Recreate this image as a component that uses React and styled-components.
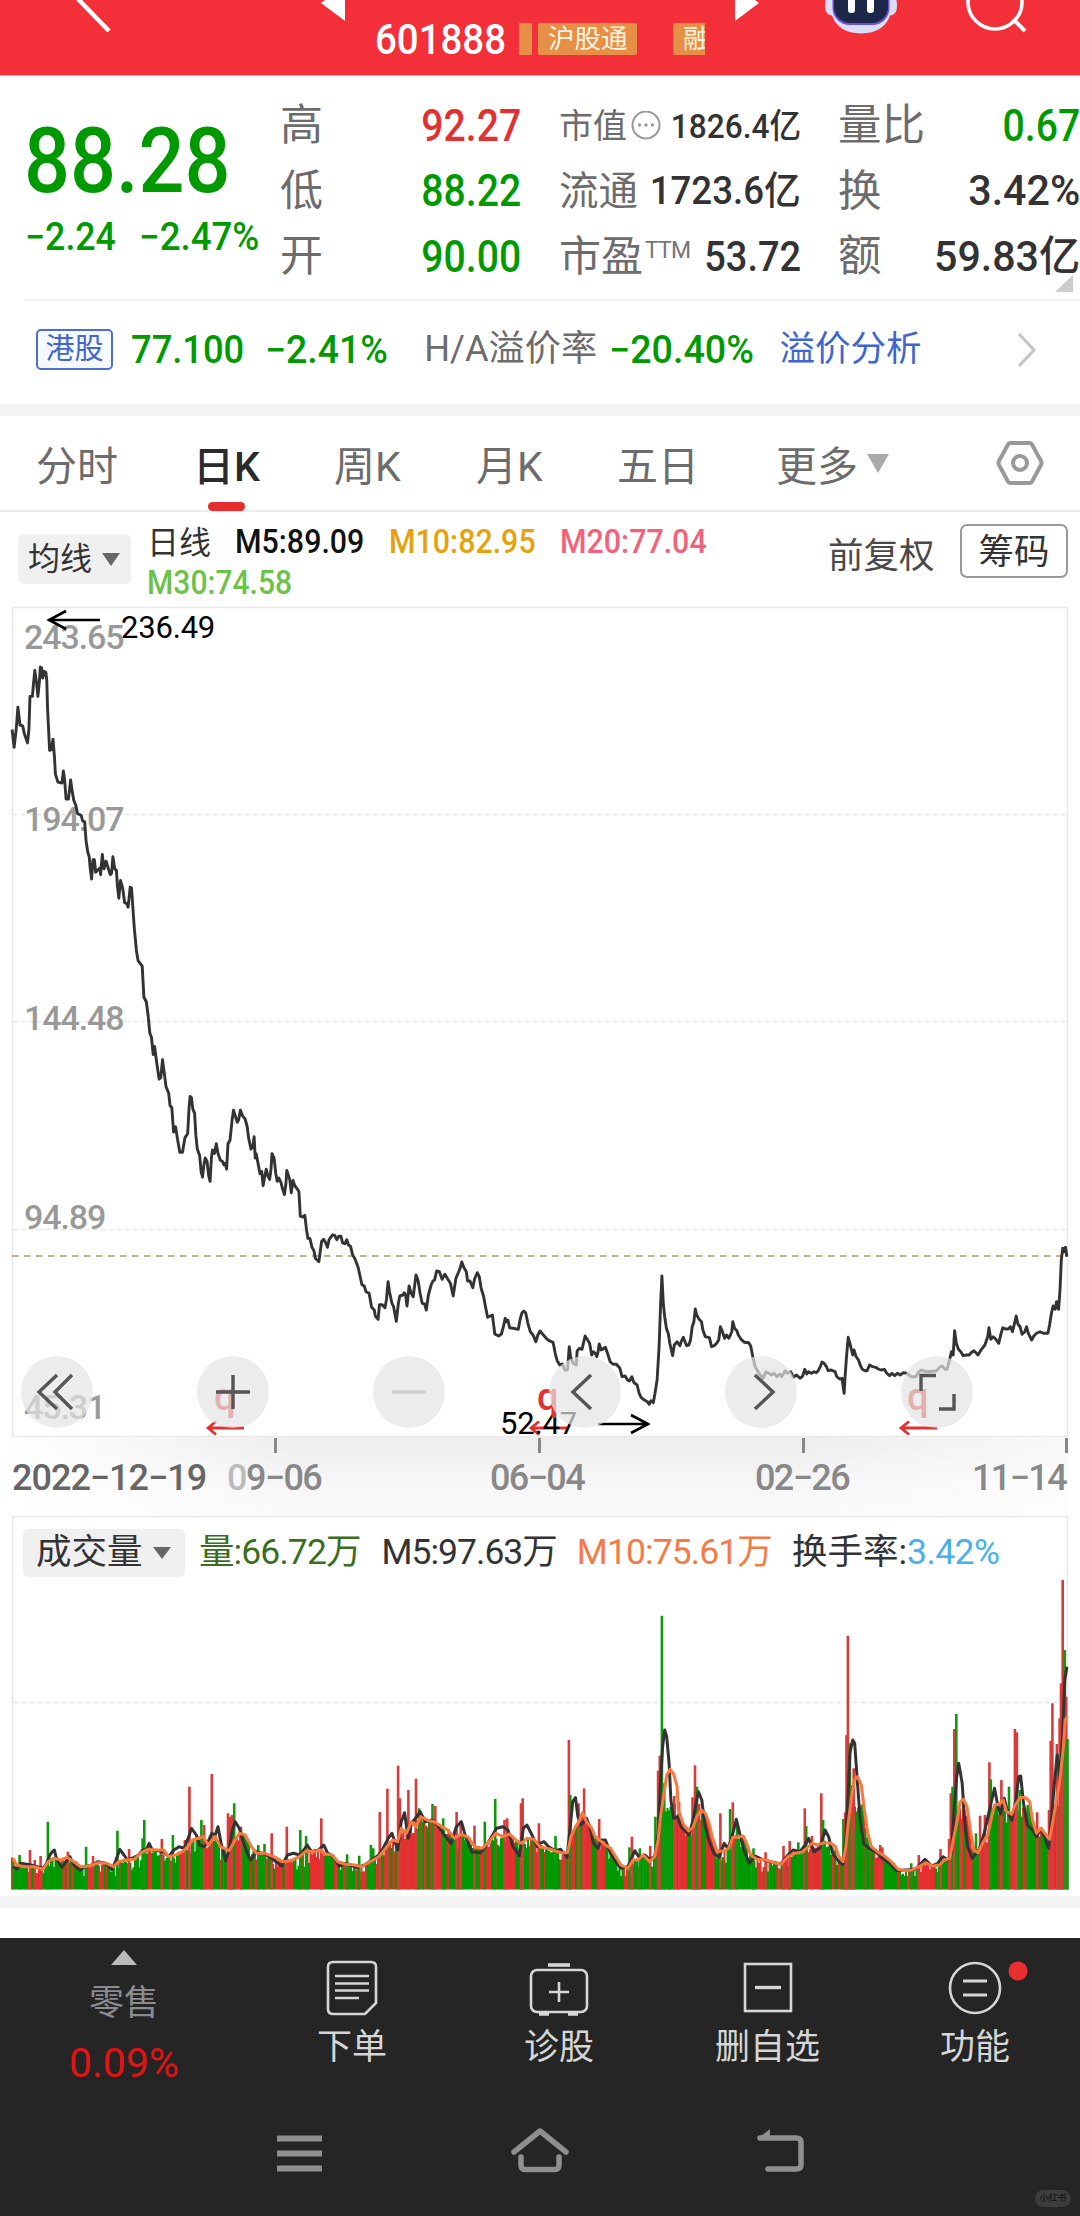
import React from 'react';
import styled, { createGlobalStyle, css } from 'styled-components';

const GlobalStyle = createGlobalStyle`
  * {
    box-sizing: border-box;
  }

  body {
    margin: 0;
    background: #fff;
    font-family: Roboto, 'Noto Sans CJK SC', sans-serif;
    color: #333;
  }
`;

const GREEN = '#009a00';
const RED = '#e03232';

/* ---------- shared ---------- */

const Page = styled.div`
  width: 1080px;
  height: 2216px;
  display: flex;
  flex-direction: column;
  overflow: hidden;
  background: #fff;
`;

const Txt = styled.span`
  font-size: ${p => p.$size}px;
  font-weight: ${p => p.$weight || 400};
  letter-spacing: ${p => p.$ls || 0}px;
  margin-left: ${p => p.$ml || 0}px;
  color: ${p => p.$color || 'inherit'};
  line-height: 1;
  white-space: nowrap;
`;

// condensed figures, squeezed toward their left or right edge
const Num = styled(Txt)`
  display: block;
  font-weight: 500;
  transform: scaleX(${p => p.$sx || 0.94});
  transform-origin: ${p => (p.$right ? 'right' : 'left')} center;
`;

const Gap = styled.div`
  flex: none;
  height: 12px;
  background: #f4f4f4;
`;

const Caret = styled.i`
  width: 0;
  height: 0;
  margin-left: ${p => p.$ml || 0}px;
  border-left: ${p => p.$w / 2}px solid transparent;
  border-right: ${p => p.$w / 2}px solid transparent;
  ${p =>
    p.$up
      ? css`
          border-bottom: ${p.$h}px solid ${p.$color};
        `
      : css`
          border-top: ${p.$h}px solid ${p.$color};
        `}
`;

/* ---------- header ---------- */

const HeaderBar = styled.header`
  position: relative;
  flex: none;
  height: 76px;
  padding: 22px 0 0 375px;
  display: flex;
  align-items: flex-start;
  background: #f3303a;
  border-bottom: 1px solid #f9a5a8;
  overflow: hidden;
`;

const HeaderArt = styled.svg`
  position: absolute;
  left: 0;
  top: 0;
`;

const Code = styled.div`
  width: 144px;
  padding-top: 1px;
  height: 35px;

  span {
    line-height: 34px;
  }
`;

const TagStrip = styled.div`
  width: 186px;
  height: 33px;
  margin-top: 1px;
  display: flex;
  overflow: hidden;
`;

const Tag = styled.div`
  flex: none;
  width: ${p => p.$w}px;
  height: 32px;
  margin-right: ${p => p.$mr || 0}px;
  padding-left: 10px;
  border-radius: ${p => (p.$cut ? '0 2px 2px 0' : '2px')};
  background: #e58f47;
  color: #fff4e0;
  font-size: 26.5px;
  line-height: 31px;
  white-space: nowrap;
`;

const Header = () => (
  <HeaderBar>
    <HeaderArt width="1080" height="76" viewBox="0 0 1080 76" fill="none">
      <path d="M78 -1 L109 31" stroke="#fff" strokeWidth="4.5" />
      <path d="M345 -15 V21 L321 3 Z M735 -15 V21 L759 3 Z" fill="#fff" />
      <path
        d="M827 -4 Q824 2 825.500 10 Q827 15 832 15.500 Q838 33 861 33.500 Q884 33 890 15.500 Q895 15 896.500 10 Q898 2 895 -4 Z"
        fill="#dcdcf6"
      />
      <rect x="832.5" y="-24" width="57" height="49" rx="17" fill="#6650d4" />
      <rect x="834" y="-24" width="54" height="47" rx="16" fill="#1d2848" />
      <rect x="848" y="-8" width="7" height="21" rx="3" fill="#fff" />
      <rect x="867" y="-8" width="7" height="21" rx="3" fill="#fff" />
      <circle cx="995" cy="2" r="27" stroke="#fff" strokeWidth="3.6" />
      <path d="M1013 19 L1025 31" stroke="#fff" strokeWidth="4" />
    </HeaderArt>
    <Code>
      <Num $size={42} $sx={0.915} $color="#fff">
        601888
      </Num>
    </Code>
    <TagStrip>
      <Tag $w={13} $mr={6} $cut />
      <Tag $w={99} $mr={36}>
        沪股通
      </Tag>
      <Tag $w={99}>融</Tag>
    </TagStrip>
  </HeaderBar>
);

/* ---------- quote ---------- */

const Quote = styled.section`
  position: relative;
  flex: none;
  height: 225px;
  margin-left: 24px;
  display: flex;
  border-bottom: 2px solid #f3f3f3;
`;

const PriceBox = styled.div`
  width: 256px;
  padding-top: 42px;
  color: ${GREEN};
`;

const Price = styled.div`
  height: 88px;

  span {
    line-height: 88px;
  }
`;

const Change = styled.div`
  display: flex;
  align-items: center;
  height: 68px;
  margin-top: -3px;
  padding-left: 1px;
`;

const StatCol = styled.div`
  width: ${p => p.$w}px;
  margin-left: ${p => p.$ml || 0}px;
  padding-top: 17px;
`;

const Stat = styled.div`
  display: flex;
  align-items: center;
  height: 65.5px;
  color: #333;

  span:first-child {
    color: #6c6c6c;
  }

  span:last-child {
    margin-left: auto;
  }
`;

const Sup = styled.span`
  align-self: flex-start;
  margin: 15px 0 0 2px;
  font-size: 23px;
  line-height: 1;
  letter-spacing: -0.8px;
  color: #777;
`;

const Corner = styled.i`
  position: absolute;
  right: 7px;
  bottom: 7px;
  border-left: 18px solid transparent;
  border-bottom: 17px solid #ccc;
`;

const Dots = styled.svg`
  flex: none;
  margin-left: 4px;
`;

const DotsIcon = () => (
  <Dots width="30" height="30" viewBox="0 0 30 30">
    <circle cx="15" cy="14" r="13.5" fill="none" stroke="#999" strokeWidth="2" />
    <circle cx="8.5" cy="14" r="1.7" fill="#999" />
    <circle cx="15" cy="14" r="1.7" fill="#999" />
    <circle cx="21.5" cy="14" r="1.7" fill="#999" />
  </Dots>
);

const QuotePanel = () => (
  <Quote>
    <PriceBox>
      <Price>
        <Num $size={90} $sx={0.9}>
          88.28
        </Num>
      </Price>
      <Change>
        <Num $size={38} $sx={0.94}>
          −2.24
        </Num>
        <Num $size={38} $sx={0.965} $ml={17}>
          −2.47%
        </Num>
      </Change>
    </PriceBox>
    <StatCol $w={241}>
      <Stat>
        <Txt $size={43}>高</Txt>
        <Num $size={44} $sx={0.89} $right $color={RED}>
          92.27
        </Num>
      </Stat>
      <Stat>
        <Txt $size={43}>低</Txt>
        <Num $size={44} $sx={0.89} $right $color={GREEN}>
          88.22
        </Num>
      </Stat>
      <Stat>
        <Txt $size={43}>开</Txt>
        <Num $size={44} $sx={0.89} $right $color={GREEN}>
          90.00
        </Num>
      </Stat>
    </StatCol>
    <StatCol $w={242} $ml={38}>
      <Stat>
        <Txt $size={34}>市值</Txt>
        <DotsIcon />
        <Num $size={34} $sx={0.93} $right>
          1826.4亿
        </Num>
      </Stat>
      <Stat>
        <Txt $size={39.5}>流通</Txt>
        <Num $size={39} $sx={0.94} $right>
          1723.6亿
        </Num>
      </Stat>
      <Stat>
        <Txt $size={42}>市盈</Txt>
        <Sup>TTM</Sup>
        <Num $size={42} $sx={0.905} $right>
          53.72
        </Num>
      </Stat>
    </StatCol>
    <StatCol $w={242} $ml={37}>
      <Stat>
        <Txt $size={43.5}>量比</Txt>
        <Num $size={44} $sx={0.89} $right $color={GREEN}>
          0.67
        </Num>
      </Stat>
      <Stat>
        <Txt $size={43.5}>换</Txt>
        <Num $size={42} $sx={0.98} $right>
          3.42%
        </Num>
      </Stat>
      <Stat>
        <Txt $size={43.5}>额</Txt>
        <Num $size={42} $sx={0.98} $right>
          59.83亿
        </Num>
      </Stat>
    </StatCol>
    <Corner />
  </Quote>
);

/* ---------- H share row ---------- */

const HkRow = styled.section`
  flex: none;
  height: 103px;
  padding: 0 43px 6px 36px;
  display: flex;
  align-items: center;

  svg {
    margin-left: auto;
  }
`;

const HkTag = styled.div`
  flex: none;
  width: 77px;
  height: 41px;
  border: 2px solid #4a6fd0;
  border-radius: 5px;
  background: #f6f9ff;
  color: #3f66cc;
  font-size: 29px;
  line-height: 37px;
  text-align: center;
`;

const HkPanel = () => (
  <HkRow>
    <HkTag>港股</HkTag>
    <Num $size={38} $sx={0.955} $ml={18} $color={GREEN}>
      77.100
    </Num>
    <Num $size={38} $sx={0.985} $ml={15} $color={GREEN}>
      −2.41%
    </Num>
    <Txt $size={36.2} $ml={35} $color="#6c6c6c">
      H/A溢价率
    </Txt>
    <Num $size={38} $sx={0.99} $ml={12} $color={GREEN}>
      −20.40%
    </Num>
    <Txt $size={35.5} $ml={24} $color="#3f66cc">
      溢价分析
    </Txt>
    <svg width="20" height="36" viewBox="0 0 20 36" fill="none">
      <path d="M2 2 L17 18 L2 34" stroke="#c4c4c4" strokeWidth="3" />
    </svg>
  </HkRow>
);

/* ---------- tabs ---------- */

const TabBar = styled.nav`
  flex: none;
  height: 96px;
  padding-left: 36px;
  display: flex;
  align-items: center;
  border-bottom: 2px solid #ebebeb;
`;

const Tab = styled.div`
  position: relative;
  flex: none;
  width: ${p => p.$w}px;
  height: 92px;
  display: flex;
  align-items: center;
  font-size: 41px;
  font-weight: ${p => (p.$on ? 500 : 400)};
  color: ${p => (p.$on ? '#2b2b2b' : '#6c6c6c')};

  &::after {
    content: '';
    display: ${p => (p.$on ? 'block' : 'none')};
    position: absolute;
    left: 15px;
    bottom: -2px;
    width: 37px;
    height: 9px;
    border-radius: 5px;
    background: #e52d2d;
  }
`;

const TabPanel = () => (
  <TabBar>
    <Tab $w={157}>分时</Tab>
    <Tab $w={141} $on>
      日K
    </Tab>
    <Tab $w={142}>周K</Tab>
    <Tab $w={141}>月K</Tab>
    <Tab $w={159}>五日</Tab>
    <Tab $w={220}>
      更多
      <Caret $w={23} $h={19} $ml={9} $color="#aaa" />
    </Tab>
    <svg width="48" height="48" viewBox="0 0 48 48" fill="none" stroke="#999" strokeWidth="4">
      <path d="M14 4 H34 Q35 4 36 5.5 L45 22 Q46 24 45 26 L36 42.5 Q35 44 34 44 H14 Q13 44 12 42.5 L3 26 Q2 24 3 22 L12 5.5 Q13 4 14 4 Z" />
      <circle cx="24" cy="24" r="7" />
    </svg>
  </TabBar>
);

/* ---------- moving averages ---------- */

const MaRow = styled.section`
  flex: none;
  height: 94px;
  padding: 12px 12px 0 18px;
  display: flex;
`;

const Picker = styled.div`
  flex: none;
  width: ${p => p.$w}px;
  height: ${p => p.$h}px;
  padding-left: ${p => p.$pl}px;
  margin-top: ${p => p.$mt || 0}px;
  display: flex;
  align-items: center;
  border-radius: 6px;
  background: #f0f0f0;
  font-size: ${p => p.$size}px;
  line-height: 1;
  color: #333;
`;

const MaList = styled.div`
  flex: none;
  width: 590px;
  margin: -2px 0 0 16px;
`;

const MaLine = styled.div`
  display: flex;
  align-items: center;
  height: 41px;
`;

const Adjust = styled.div`
  flex: none;
  width: 132px;
  margin-left: 91px;
  font-size: 35.5px;
  line-height: 65px;
  color: #4a4a4a;
`;

const ChipButton = styled.div`
  flex: none;
  width: 108px;
  height: 54px;
  border: 2px solid #999;
  border-radius: 7px;
  font-size: 35.5px;
  line-height: 53px;
  text-align: center;
  color: #333;
`;

const MaPanel = () => (
  <MaRow>
    <Picker $w={113} $h={50} $pl={10} $mt={10} $size={32}>
      均线
      <Caret $w={18} $h={13} $ml={10} $color="#666" />
    </Picker>
    <MaList>
      <MaLine>
        <Txt $size={32}>日线</Txt>
        <Num $size={32.5} $sx={0.935} $ml={24} $color="#111">
          M5:89.09
        </Num>
        <Num $size={32.5} $sx={0.935} $ml={16} $color="#e6a20c">
          M10:82.95
        </Num>
        <Num $size={32.5} $sx={0.935} $ml={14} $color="#f2637a">
          M20:77.04
        </Num>
      </MaLine>
      <MaLine>
        <Num $size={32.5} $sx={0.925} $color="#6cc24a">
          M30:74.58
        </Num>
      </MaLine>
    </MaList>
    <Adjust>前复权</Adjust>
    <ChipButton>筹码</ChipButton>
  </MaRow>
);

/* ---------- price chart ---------- */

const EARLY =
  '35,290 41,330 47,290 52,240 58,280 66,282 71,300 80,320 84,290 87,216 94,216 97,190 101,158 106,185 110,216 114,185 117,150 121,152 124,175 128,160 133,162 136,180 138,240 141,290 144,337 149,335 154,312 158,350 161,390 168,408 180,410 184,383 188,405 192,446 199,446 205,403 209,425 214,448 220,460 225,478 236,483 240,495 246,497 250,540 255,565 259,575 262,600 266,625 270,582 274,582 278,610 284,605 290,600 292,615 297,570 302,602 308,585 314,600 320,615 324,612 328,575 333,602 338,605 341,640 345,668 350,628 356,645 362,678 368,680 372,688 378,643 382,645 386,690 390,735 396,785 401,808 413,820 418,890 425,900 430,930 435,970 440,980 445,1018 449,1000 454,1030 462,1073 467,1070 472,1030 478,1065 482,1090 490,1105 494,1133 499,1137 504,1192 510,1180 516,1210 522,1237 530,1237 537,1205 545,1195 549,1140 552,1112 556,1115 560,1140 565,1150 569,1200 573,1230 580,1245 584,1280 588,1293 592,1265 596,1250 601,1257 606,1290 610,1302 614,1250 617,1232 623,1240 628,1218 633,1240 640,1255 646,1258 650,1265 654,1262 658,1275 662,1218 668,1210 674,1165 678,1143 683,1155 689,1170 693,1165 698,1143 704,1155 712,1163 718,1180 722,1205 729,1230 734,1225 738,1202 741,1250 744,1240 750,1265 755,1285 760,1280 764,1312 768,1295 773,1275 778,1290 783,1298 787,1275 790,1240 796,1250 801,1285 805,1302 810,1295 816,1305 821,1320 826,1332 830,1310 833,1278 838,1290 842,1300 846,1328 851,1300 856,1312 862,1318 868,1325 872,1380 880,1382 885,1378 890,1410 894,1430 900,1430 906,1450 912,1458 916,1475 926,1482 930,1460 934,1437 940,1432 946,1440 951,1450 956,1432 961,1427 966,1422 972,1423 978,1433 984,1425 990,1425 995,1440 1002,1442 1007,1433 1012,1445 1018,1448';
const MIDDLE =
  '1024,225 1030,235 1040,262 1046,290 1051,314 1058,318 1063,335 1072,340 1079,382 1087,390 1090,408 1098,418 1102,374 1110,374 1118,383 1122,360 1127,305 1131,335 1138,370 1143,380 1151,424 1157,370 1161,348 1170,345 1174,338 1178,345 1182,378 1188,318 1194,340 1200,350 1208,285 1214,300 1220,340 1226,370 1233,372 1238,390 1244,345 1252,315 1257,303 1262,300 1268,273 1276,275 1284,298 1292,283 1300,297 1308,310 1316,348 1324,295 1332,275 1336,265 1341,246 1347,262 1354,275 1358,303 1365,303 1373,323 1378,298 1386,278 1392,290 1397,325 1404,348 1410,380 1416,412 1430,405 1437,462 1448,468 1456,462 1462,440 1467,415 1471,425 1475,420 1480,443 1490,445 1505,448 1510,420 1516,398 1521,393 1527,400 1533,430 1540,455 1548,465 1556,485 1562,465';
const LATE =
  '0,453 10,465 18,475 26,482 38,487 44,520 50,542 58,556 65,552 72,570 80,570 85,500 89,530 96,550 105,555 108,512 115,505 122,508 126,490 131,468 137,478 144,490 150,525 155,515 160,520 165,530 168,518 172,492 178,510 190,502 196,520 204,545 212,553 222,553 232,565 238,590 247,588 254,600 260,603 267,590 273,608 282,615 288,640 294,653 303,660 312,665 317,673 322,662 329,668 334,640 340,600 346,500 350,380 354,288 358,370 362,410 367,445 373,462 377,490 385,527 390,495 398,485 406,497 410,485 416,472 421,485 426,497 432,495 437,480 442,440 447,425 451,387 455,405 462,418 469,425 473,450 480,470 492,473 498,500 506,497 514,488 519,480 524,440 530,455 536,475 542,465 548,475 553,465 557,455 560,425 565,445 572,453 576,465 584,478 594,487 606,488 612,498 618,530 625,560 636,580 648,595 656,575 664,580 672,585 680,580 688,590 696,582 702,590 712,572 718,580 728,575 736,592 744,585 750,590 756,595 763,588 769,568 775,582 780,575 788,580 796,575 802,578 808,572 814,560 819,546 825,550 832,560 837,572 846,570 852,573 857,575 862,590 870,597 877,595 883,640 886,590 890,530 895,472 900,490 908,525 912,510 918,530 925,540 930,555 936,568 944,572 950,572 957,555 966,560 975,562 982,567 990,570 1000,568 1006,578 1015,587 1022,580 1030,587 1038,580 1046,585 1055,578 1065,580 1078,590 1092,590 1100,575 1108,570 1120,575 1140,574 1152,572 1160,562 1168,558 1176,568 1182,568 1188,545 1195,515 1200,525 1204,452 1209,490 1215,508 1222,515 1229,527 1238,525 1246,525 1252,518 1260,512 1266,518 1272,525 1282,508 1292,495 1300,470 1304,443 1309,478 1316,470 1324,478 1332,490 1338,465 1344,443 1352,447 1360,447 1366,440 1372,455 1378,430 1383,408 1388,433 1394,440 1400,463 1408,455 1413,440 1418,460 1428,480 1434,468 1442,460 1452,455 1462,460 1475,460 1480,435 1485,400 1490,378 1496,388 1500,365 1506,388 1510,330 1514,240 1518,205 1522,215 1526,202 1530,230';

const SX = 2.904;

const parse = (str, dx, dy, sy) =>
  str.split(' ').map(pair => {
    const [x, y] = pair.split(',').map(Number);
    return [x / SX + dx, y / sy + dy];
  });

const join = pts => pts.map(([x, y]) => `${x.toFixed(1)},${y.toFixed(1)}`).join(' ');

const CLOSE = [
  ...parse(EARLY, 0, -6, 2.24),
  ...parse(MIDDLE, 0, 574, 3),
  ...parse(LATE, 540, 574, 3),
];

const ChartBox = styled.section`
  position: relative;
  flex: none;
  height: 831px;

  > svg {
    display: block;
  }
`;

const Overlay = styled.svg`
  position: absolute;
  left: 0;
  top: 0;
`;

const YLabel = styled.span`
  position: absolute;
  left: 24px;
  top: ${p => p.$y - 17}px;
  font-size: 34px;
  font-weight: 500;
  line-height: 34px;
  letter-spacing: -1.1px;
  color: #999;
`;

const Mark = styled.span`
  position: absolute;
  left: ${p => p.$x}px;
  top: ${p => p.$y}px;
  font-size: 31px;
  line-height: 31px;
  letter-spacing: -0.2px;
  color: #000;
`;

const RightsMark = styled.span`
  position: absolute;
  left: ${p => p.$x}px;
  top: 772px;
  font-size: 38px;
  font-weight: 500;
  line-height: 38px;
  color: ${RED};
`;

const Controls = styled.div`
  position: absolute;
  left: 21px;
  top: 750px;
  width: 952px;
  display: flex;
  justify-content: space-between;
`;

const Control = styled.div`
  width: 72px;
  height: 72px;
  border-radius: 50%;
  background: rgba(228, 228, 228, 0.7);

  svg {
    display: block;
  }
`;

const CONTROLS = [
  { d: 'M36 19 L18 36 L36 53 M51 19 L34 36 L51 53' },
  { d: 'M36 19 V53 M19 36 H53' },
  { d: 'M19 36 H53', off: true },
  { d: 'M42 19 L24 36 L42 53' },
  { d: 'M30 19 L48 36 L30 53' },
  { d: 'M20 35 V19.5 H35 M38 53 H53 V38' },
];

const PriceChart = () => (
  <ChartBox>
    <svg width="1080" height="831" viewBox="0 0 1080 831" fill="none">
      <rect x="12.5" y="1.5" width="1055" height="829" stroke="#e8e8e8" strokeWidth="1.5" />
      {[208.5, 415.5, 623.5].map(y => (
        <path key={y} d={`M13 ${y} H1067`} stroke="#e6e6e6" strokeWidth="1.3" strokeDasharray="4.5 3.5" />
      ))}
      <path d="M12 650 H1067" stroke="#c9b183" strokeWidth="1.8" strokeDasharray="6.5 5.5" />
    </svg>
    <YLabel $y={31}>243.65</YLabel>
    <YLabel $y={213}>194.07</YLabel>
    <YLabel $y={412}>144.48</YLabel>
    <YLabel $y={611}>94.89</YLabel>
    <YLabel $y={801}>45.31</YLabel>
    <Overlay width="1080" height="831" viewBox="0 0 1080 831" fill="none">
      <polyline points={join(CLOSE)} stroke="#333" strokeWidth="2.9" strokeLinejoin="round" />
      <path d="M100 14 H49 M66 5 L49 14 L66 23" stroke="#000" strokeWidth="2.6" />
      <path d="M598 818 H648 M631 809 L648 818 L631 827" stroke="#000" strokeWidth="2.6" />
      {[208, 531, 901].map(x => (
        <path
          key={x}
          d={`M${x + 36} 822 H${x} M${x + 8} 815.5 L${x} 822 L${x + 8} 828.5`}
          stroke={RED}
          strokeWidth="2.8"
        />
      ))}
    </Overlay>
    <Mark $x={121} $y={6}>
      236.49
    </Mark>
    <Mark $x={500} $y={802}>
      52.47
    </Mark>
    <RightsMark $x={214}>q</RightsMark>
    <RightsMark $x={537}>q</RightsMark>
    <RightsMark $x={907}>q</RightsMark>
    <Controls>
      {CONTROLS.map(({ d, off }) => (
        <Control key={d}>
          <svg width="72" height="72" viewBox="0 0 72 72" fill="none">
            <path d={d} stroke={off ? '#d0d0d0' : '#555'} strokeWidth="3.4" />
          </svg>
        </Control>
      ))}
    </Controls>
  </ChartBox>
);

/* ---------- date axis ---------- */

const Axis = styled.section`
  position: relative;
  flex: none;
  height: 79px;
  width: 1068px;
  padding: 23px 0 0 12px;
  display: flex;
  align-items: flex-start;
  background: linear-gradient(
      90deg,
      #fff 0%,
      rgba(255, 255, 255, 0) 28%,
      rgba(255, 255, 255, 0) 75%,
      rgba(255, 255, 255, 0.6) 100%
    ),
    linear-gradient(180deg, #ededed 0%, #f7f7f7 60%, #fafafa 100%);
`;

const Tick = styled.i`
  position: absolute;
  left: ${p => p.$x}px;
  top: 1px;
  width: 3px;
  height: 15px;
  background: #888;
`;

const DateLabel = styled.span`
  flex: none;
  width: ${p => p.$w}px;
  font-size: 36px;
  font-weight: 500;
  line-height: 36px;
  letter-spacing: -1.6px;
  white-space: nowrap;
  color: #888;

  i {
    font-style: normal;
    color: #bbb;
  }
`;

const StartDate = styled(DateLabel)`
  letter-spacing: -1px;
  color: #666;
`;

const DateAxis = () => (
  <Axis>
    <Tick $x={273.5} />
    <Tick $x={538} />
    <Tick $x={802} />
    <Tick $x={1065} />
    <StartDate $w={215}>2022−12−19</StartDate>
    <DateLabel $w={263}>
      <i>0</i>9−06
    </DateLabel>
    <DateLabel $w={265}>06−04</DateLabel>
    <DateLabel $w={217}>02−26</DateLabel>
    <DateLabel $w={96}>11−14</DateLabel>
  </Axis>
);

/* ---------- volume ---------- */

const M10_A =
  '38,1075 48,1095 70,1100 100,1100 125,1108 140,1085 155,1075 180,1080 195,1072 215,1085 235,1100 260,1098 285,1088 310,1090 330,1100 345,1085 365,1080 390,1078 410,1058 430,1048 450,1050 475,1050 490,1070 510,1065 530,1055 545,1040 560,1020 590,1010 605,1035 625,1010 640,1040 665,1052 680,1025 695,1000 712,1005 730,1040 745,1060 770,1060 800,1072 820,1085 845,1082 870,1070 890,1052 910,1055 930,1050 945,1062 965,1065 980,1085 1000,1092 1030,1095 1050,1100 1075,1085 1100,1070 1120,1045 1140,1020 1155,1025 1165,985 1180,1000 1195,965 1208,980 1222,950 1240,960 1260,965 1280,978 1300,990 1320,1015 1340,1003 1360,1012 1380,1042 1400,1045 1420,1025 1440,1000 1460,1010 1480,1002 1500,1022 1515,1030 1530,1015 1550,1018';
const M10_B =
  '0,1040 30,1048 60,1058 80,1058 90,1010 103,980 113,965 123,938 135,965 150,985 160,1010 175,1022 190,1035 205,1045 220,1070 235,1095 255,1105 270,1080 285,1080 300,1065 318,1085 333,1070 343,1020 350,950 360,880 368,825 378,808 388,822 398,860 402,930 415,970 432,993 445,980 455,950 468,930 480,940 490,965 500,1010 515,1055 535,1052 548,1045 560,1012 575,1012 590,1008 600,1030 612,1065 630,1078 655,1080 680,1088 700,1093 720,1070 740,1060 760,1057 775,1045 790,1030 805,1035 825,1028 845,1030 858,1040 868,1070 880,1085 888,1040 895,970 905,890 913,840 922,830 933,855 942,930 952,1000 962,1040 980,1055 1000,1068 1020,1085 1040,1108 1060,1112 1080,1110 1100,1100 1120,1088 1140,1098 1160,1095 1175,1080 1190,1075 1200,1020 1212,960 1220,905 1230,898 1240,920 1250,990 1260,1050 1272,1058 1285,1030 1300,1005 1312,950 1320,915 1335,912 1345,900 1355,935 1370,943 1380,915 1395,892 1410,893 1422,905 1430,960 1442,1000 1455,985 1470,1005 1480,1018 1490,960 1500,900 1510,840 1520,740 1525,660 1532,650';
const M5_A =
  '38,1100 50,1108 60,1090 90,1095 125,1105 135,1090 145,1065 152,1055 158,1050 165,1080 180,1102 192,1085 203,1070 215,1095 232,1110 245,1100 260,1098 285,1085 305,1090 325,1108 335,1085 348,1048 360,1065 370,1080 390,1072 402,1065 415,1050 425,1050 433,1030 442,1050 460,1052 475,1055 490,1070 505,1050 520,1040 535,1045 548,1010 556,985 570,1005 580,1035 592,1040 602,1030 615,1000 625,1005 633,980 642,1030 655,1082 665,1050 675,990 683,965 695,985 708,1030 718,1060 728,1080 745,1055 770,1062 795,1080 818,1098 835,1065 852,1060 870,1065 882,1050 892,1035 905,1055 925,1050 940,1035 952,1060 968,1070 985,1098 1005,1090 1035,1103 1060,1095 1080,1080 1100,1065 1115,1040 1127,1015 1138,1000 1155,1050 1165,965 1175,938 1185,1015 1195,970 1210,950 1220,935 1235,965 1255,960 1270,975 1290,1005 1310,1030 1325,980 1340,965 1352,1010 1370,1055 1395,1058 1410,1040 1425,1015 1442,985 1460,980 1475,990 1490,1040 1508,1068 1520,985 1530,975 1545,1005 1560,1040';
const M5_B =
  '0,1030 12,1025 25,1040 45,1052 60,1048 78,1072 88,980 95,905 103,893 110,950 120,975 135,955 145,980 155,1030 168,1045 178,1020 190,1020 205,1060 220,1085 235,1105 255,1100 268,1070 275,1052 290,1075 305,1065 318,1078 333,1070 343,1000 350,850 356,740 362,690 368,710 375,790 380,900 388,955 400,950 410,980 432,1005 445,960 453,910 460,875 470,900 478,970 490,1020 505,1060 520,1072 535,1030 545,1045 555,1020 570,958 580,1000 592,1050 608,1090 625,1068 650,1080 680,1088 700,1092 720,1065 735,1050 755,1055 770,1035 780,1015 795,1055 812,1045 828,990 838,1010 850,1060 868,1085 880,1093 888,1010 895,880 900,760 908,720 914,730 922,850 930,960 940,1030 955,1045 975,1055 995,1075 1015,1090 1035,1112 1060,1110 1090,1108 1118,1078 1138,1098 1155,1090 1170,1070 1185,1080 1195,1060 1203,920 1210,830 1216,790 1226,850 1233,960 1242,1040 1255,1075 1275,1050 1290,1000 1305,930 1320,865 1330,920 1338,942 1348,895 1358,935 1370,960 1382,900 1390,830 1396,828 1404,910 1415,975 1430,990 1442,1010 1455,985 1465,1010 1477,1045 1485,960 1493,860 1502,765 1510,840 1518,700 1524,540 1530,500';

// r = up day, g = down day
const SPIKES_A =
  'g57,1065 r87,1050 r101,1080 r118,1068 g139,965 r197,1055 g250,1040 r270,1068 g341,992 r375,1047 g414,1015 g419,960 r470,1017 g502,1005 r537,1020 r550,860 g585,960 r593,975 r615,822 r662,940 r668,950 r674,945 g680,910 r700,980 g750,1035 g768,1032 r789,1000 r833,980 g872,990 g889,1008 r933,955 g1008,1063 g1043,1067 g1077,1035 g1084,1045 r1103,936 r1125,866 r1156,797 r1161,895 r1186,870 r1208,836 g1217,925 g1256,912 r1264,918 g1287,955 r1326,936 r1338,962 r1378,977 g1408,965 g1438,897 r1465,960 r1473,955 r1513,910 r1518,895 r1565,970';
const SPIKES_B =
  'g45,1008 r84,720 g88,885 r112,910 r128,865 r172,957 g260,1042 r267,1010 g290,1045 r320,1038 g335,950 r343,812 r348,767 g354,347 g361,850 g372,935 g378,940 r390,888 r404,905 r443,892 r450,796 g456,860 r462,912 r524,940 g552,927 r560,907 g572,975 g620,1045 r655,1057 r707,1038 r725,1023 g750,1027 r769,925 g773,978 r790,1008 r817,880 g822,960 g881,957 r886,937 r890,706 r894,407 g900,730 r906,855 r911,805 g917,990 g948,1017 r988,1035 r994,1042 g1078,1090 r1100,1065 r1163,1047 r1188,1017 r1193,880 g1198,860 r1203,687 g1209,642 r1222,988 g1266,1000 r1278,947 r1292,945 r1305,787 g1309,838 r1340,840 g1362,860 r1379,687 r1385,697 g1393,870 g1417,915 r1444,937 r1478,930 r1483,722 r1488,610 r1501,732 r1509,655 r1513,550 r1518,240 g1524,450 r1528,590 g1532,717';

const M10 = [...parse(M10_A, 0, -16, 3), ...parse(M10_B, 540, -16, 3)];
const M5 = [...parse(M5_A, 0, -16, 3), ...parse(M5_B, 540, -16, 3)];

const parseSpikes = (str, dx) =>
  str.split(' ').map(s => {
    const [x, y] = s.slice(1).split(',').map(Number);
    return { x: x / SX + dx, y: y / 3 - 16, up: s[0] === 'r' };
  });

const SPIKES = [...parseSpikes(SPIKES_A, 0), ...parseSpikes(SPIKES_B, 540)];

const levelAt = x => {
  const i = M10.findIndex(p => p[0] >= x);
  if (i <= 0) return M10[i === 0 ? 0 : M10.length - 1][1];
  const [x0, y0] = M10[i - 1];
  const [x1, y1] = M10[i];
  return y0 + ((y1 - y0) * (x - x0)) / (x1 - x0);
};

const buildBars = () => {
  let seed = 77;
  const rnd = () => {
    seed = (seed * 16807) % 2147483647;
    return seed / 2147483647;
  };
  const bars = [];
  let up = false;
  for (let x = 12; x < 1065; x += 1.5) {
    if (rnd() < 0.5) up = rnd() < 0.45;
    const y = Math.min(360, Math.max(levelAt(x), 290) - 2 + rnd() * rnd() * 18);
    bars.push({ x, y, up });
  }
  return bars;
};

const BARS = buildBars();
const BASE = 373.5;

const VolumeBox = styled.section`
  position: relative;
  flex: none;
  height: 380px;

  > svg {
    display: block;
  }
`;

const VolumeLegend = styled.div`
  position: absolute;
  left: 23px;
  top: 12px;
  height: 50px;
  display: flex;
  align-items: center;
`;

const barPath = list => list.map(b => `M${b.x.toFixed(1)} ${BASE}V${b.y.toFixed(1)}`).join('');

const VolumeChart = () => (
  <VolumeBox>
    <svg width="1080" height="380" viewBox="0 0 1080 380" fill="none">
      <path d="M12.5 374 V0.5 H1067.5 V374" stroke="#e8e8e8" strokeWidth="1.5" />
      <path d="M13 186.5 H1067" stroke="#e4e4e4" strokeWidth="1.3" strokeDasharray="4.5 3.5" />
      <path d={barPath(BARS.filter(b => b.up))} stroke="#e52f2f" strokeWidth="2" />
      <path d={barPath(BARS.filter(b => !b.up))} stroke={GREEN} strokeWidth="2" />
      {SPIKES.map(s => (
        <path
          key={s.x}
          d={`M${s.x.toFixed(1)} ${BASE}V${s.y.toFixed(1)}`}
          stroke={s.up ? '#d93a3a' : '#0c9a0c'}
          strokeWidth="2.6"
        />
      ))}
      <polyline points={join(M5)} stroke="#333" strokeWidth="3" strokeLinejoin="round" />
      <polyline points={join(M10)} stroke="#f8783f" strokeWidth="3" strokeLinejoin="round" />
    </svg>
    <VolumeLegend>
      <Picker $w={162} $h={48} $pl={13} $size={35.5}>
        成交量
        <Caret $w={19} $h={12} $ml={10} $color="#666" />
      </Picker>
      <Txt $size={35.5} $ls={-0.9} $ml={14} $color="#3a6e1c">
        量:66.72万
      </Txt>
      <Txt $size={35.5} $ls={-1} $ml={21}>
        M5:97.63万
      </Txt>
      <Txt $size={35.5} $ls={-0.9} $ml={20} $color="#f47b45">
        M10:75.61万
      </Txt>
      <Txt $size={35.5} $ml={20}>
        换手率:
      </Txt>
      <Txt $size={35.5} $ls={-0.6} $color="#4ab0ea">
        3.42%
      </Txt>
    </VolumeLegend>
  </VolumeBox>
);

/* ---------- bottom bar ---------- */

const Footer = styled.footer`
  position: relative;
  flex: none;
  height: 278px;
  margin-top: 30px;
  background: #252525;
`;

const Actions = styled.div`
  height: 165px;
  display: grid;
  grid-template-columns: 248px 208px 206px 211px 204px;
`;

const Sector = styled.div`
  display: flex;
  flex-direction: column;
  align-items: center;
  padding-top: 12px;
`;

const SectorName = styled.div`
  margin-top: 21px;
  font-size: 35px;
  line-height: 36px;
  color: #8b8b90;
`;

const SectorChange = styled.div`
  margin-top: 20px;
  font-size: 41px;
  line-height: 42px;
  color: #e01414;
`;

const Action = styled.div`
  display: flex;
  flex-direction: column;
  align-items: center;
  padding-top: 21px;
  font-size: 35px;
  line-height: 36px;
  color: #d6d6d6;

  svg {
    flex: none;
    overflow: visible;
    margin-bottom: 11px;
  }
`;

const ICONS = {
  order: (
    <>
      <path d="M9 3 H47 Q52 3 52 8 V44 L41 55 H9 Q4 55 4 50 V8 Q4 3 9 3 Z" />
      <path d="M11 17 H45 M11 24.5 H45 M11 31.5 H45 M11 39 H35" />
    </>
  ),
  diagnose: (
    <>
      <path d="M17 6 H39" strokeWidth="3.6" />
      <rect x="0" y="11" width="56" height="42" rx="6" />
      <path d="M8 55 H18 M37 55 H47" strokeWidth="3.6" />
      <path d="M28 23 V43 M18 33 H38" />
    </>
  ),
  remove: (
    <>
      <rect x="5" y="5" width="46" height="47" />
      <path d="M15 28.5 H41" strokeWidth="3.4" />
    </>
  ),
  more: (
    <>
      <circle cx="28" cy="29" r="25" />
      <path d="M16 22 H40 M16 36 H40" strokeWidth="3" />
      <circle cx="71" cy="12" r="9.5" fill="#e92f2f" stroke="none" />
    </>
  ),
};

const ACTIONS = [
  ['order', '下单'],
  ['diagnose', '诊股'],
  ['remove', '删自选'],
  ['more', '功能'],
];

const SystemNav = styled.div`
  display: flex;
  padding-left: 270px;
  gap: 180px;
`;

const Watermark = styled.div`
  position: absolute;
  right: 9px;
  bottom: 9px;
  width: 36px;
  height: 17px;
  border-radius: 9px;
  background: #3d3d3d;
  color: #1e1e1e;
  font-size: 9px;
  font-weight: 700;
  line-height: 17px;
  text-align: center;
`;

const BottomBar = () => (
  <Footer>
    <Actions>
      <Sector>
        <Caret $w={27} $h={15} $color="#bbb" $up />
        <SectorName>零售</SectorName>
        <SectorChange>0.09%</SectorChange>
      </Sector>
      {ACTIONS.map(([icon, label]) => (
        <Action key={icon}>
          <svg width="56" height="60" viewBox="0 0 56 60" fill="none" stroke="#d6d6d6" strokeWidth="2.6">
            {ICONS[icon]}
          </svg>
          {label}
        </Action>
      ))}
    </Actions>
    <SystemNav>
      <svg width="60" height="84" viewBox="0 0 60 84" stroke="#8f8f8f" strokeWidth="6">
        <path d="M7 35.5 H52 M7 50.5 H52 M7 65.5 H52" />
      </svg>
      <svg width="60" height="84" viewBox="0 0 60 84" fill="none" stroke="#8f8f8f" strokeWidth="5.5">
        <path d="M4 49 L30 28 L56 49" strokeLinecap="round" strokeLinejoin="round" />
        <path d="M11 54 V62 Q11 66.500 15 66.500 H45 Q49 66.500 49 62 V54" strokeLinecap="round" />
      </svg>
      <svg width="60" height="84" viewBox="0 0 60 84" fill="none" stroke="#8f8f8f" strokeWidth="5.5">
        <path d="M18 66 H46 Q51 66 51 62 V39 Q51 35 46 35 H10" strokeLinecap="round" />
        <path d="M7 36 L20 26 V36 Z" fill="#8f8f8f" stroke="none" />
      </svg>
    </SystemNav>
    <Watermark>小红书</Watermark>
  </Footer>
);

const App = () => (
  <>
    <GlobalStyle />
    <Page>
      <Header />
      <QuotePanel />
      <HkPanel />
      <Gap />
      <TabPanel />
      <MaPanel />
      <PriceChart />
      <DateAxis />
      <VolumeChart />
      <Gap />
      <BottomBar />
    </Page>
  </>
);

export default App;
